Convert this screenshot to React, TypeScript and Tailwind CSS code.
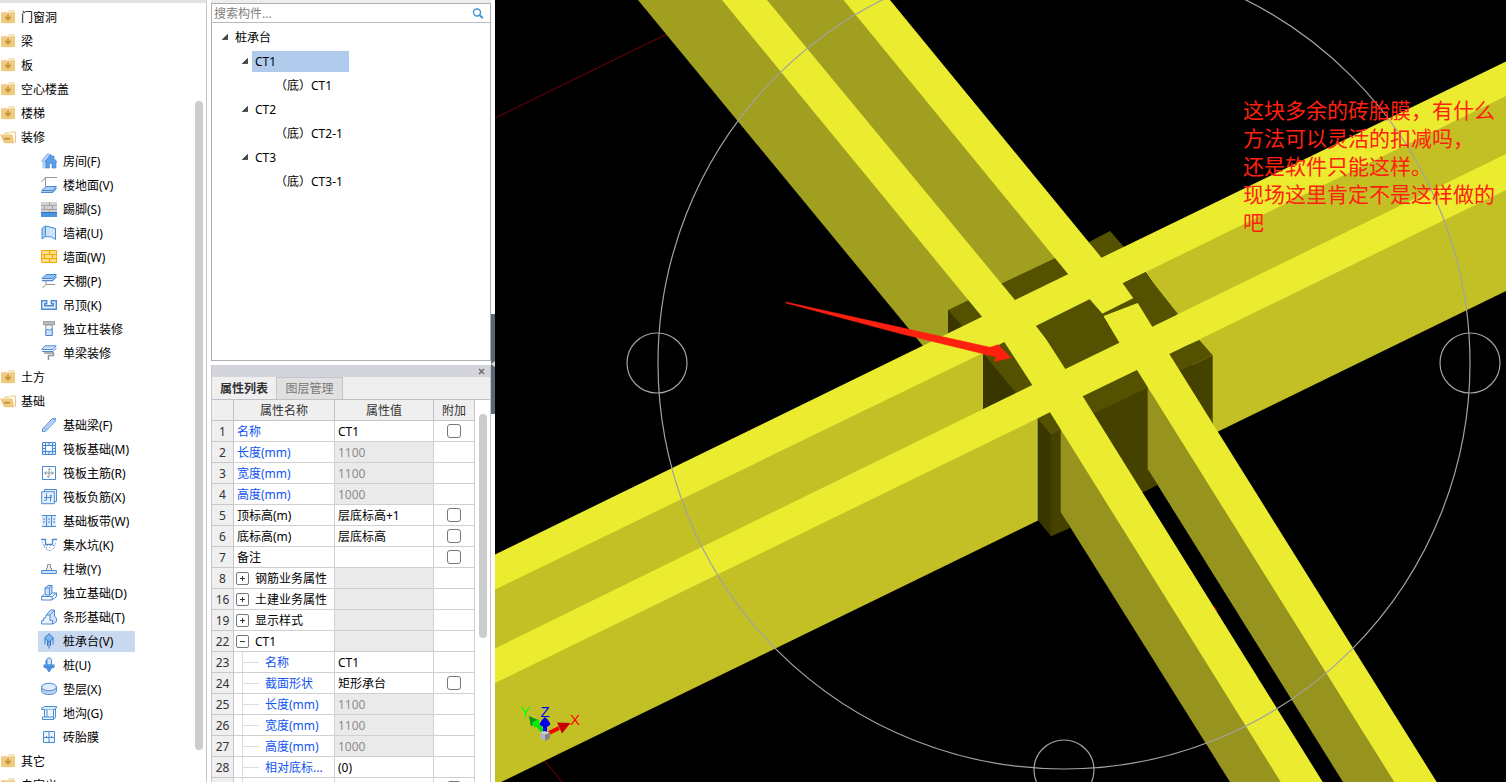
import type { ReactNode } from 'react';

/** Stroke presets shared by the component icons (16x16 grid). */
const BLUE = '#4a8ad4';
const PALE = '#cfe1f8';
const GREY = '#8f959b';

const ICONS: Record<string, ReactNode> = {
  room: (
    <>
      <path d="M.7 8.500 6.500 1.500 8 .8" fill="none" stroke="#9cc3f0" strokeWidth={2} />
      <path d="M2 8.500h2.500V15H2z" fill="#bcd7f6" stroke="#86b4ea" strokeWidth={0.6} />
      <path d="M9.500 1 3.500 8.500H5V15h3.500v-4.500h2.500V15h4V9h1L13 5.500V3h-1.500v1z" fill="#5a9ee8" stroke="#3f80cf" strokeWidth={0.6} />
    </>
  ),
  floor: (
    <>
      <path d="M0 5.500 4.500.5H16M4.500.5v9" fill="none" stroke={GREY} />
      <path d="M5 9.500h10.500L11 13.500H.8z" fill="#a9cdf6" stroke={BLUE} />
      <path d="M0 15.300h11.300l4.200-4" fill="none" stroke={BLUE} strokeWidth={1.400} />
    </>
  ),
  skirting: (
    <>
      <path d="M0 1h16v10H0z" fill="#d2d2d2" />
      <path d="M0 4.500h16M0 8.500h16M8.500 1v3.500M3.500 4.500v4M11.500 4.500v4M8.500 8.500v2.500" fill="none" stroke="#a4a4a4" />
      <path d="M0 11h16v5H0z" fill="#4a94e2" />
      <path d="M0 11.500h16" stroke="#2f73c4" />
    </>
  ),
  dado: (
    <>
      <path d="M1 3.500 4.500 1V11.500L1 14z" fill="#a9cdf6" stroke={BLUE} />
      <path d="M4.500 1 14.500 3.500V14.500l-4-2.500-6-.5z" fill="#cfe3fb" stroke={BLUE} />
    </>
  ),
  wall: (
    <>
      <path d="M.5 1.500h15v12H.5z" fill="#ffe08a" stroke="#f5a800" />
      <path d="M0 5.500h16M0 9.500h16M8.500 1v4.500M3.500 5.500v4M11.500 5.500v4M8.500 9.500v4" fill="none" stroke="#f5a800" strokeWidth={1.200} />
    </>
  ),
  ceiling: (
    <>
      <path d="M5 1.500h10.500l-4 4H1z" fill="#8fbff5" stroke={BLUE} />
      <path d="M1 7.500h10.500l4-4" fill="none" stroke={BLUE} strokeWidth={1.300} />
      <path d="M5 7.500v4H14M5 11.500 1.500 15" fill="none" stroke={GREY} />
    </>
  ),
  suspended: (
    <path d="M.7 3.700h5v3h-2v2h8.600v-2h-2v-3h5v8.600H.7z" fill="#e4effc" stroke={BLUE} strokeWidth={1.400} />
  ),
  column: (
    <>
      <path d="M2.500.7h11v3h-11z" fill="#bcc2c6" stroke={GREY} />
      <path d="M4.800 4v10.500h6.400V4z" fill="#eef5fd" stroke={GREY} />
      <path d="M4.800 9v5.500h6.400V7.500L8.500 9.500 7 8.500z" fill={PALE} stroke={BLUE} />
    </>
  ),
  beam: (
    <>
      <path d="M4 .8h11.200L12 4.500H.8z" fill={PALE} stroke={BLUE} />
      <path d="M1 6.500h11L15.500 3" fill="none" stroke={BLUE} />
      <path d="M3 8h9.500v2.500H7.500V15" fill="none" stroke={GREY} strokeWidth={1.500} />
    </>
  ),
  fbeam: (
    <>
      <path d="M1.500 12 11 2l3.500-.5-.5 3L4.500 14.200l-3 .3z" fill={PALE} stroke={BLUE} />
      <path d="M4.500 14V11.500L13.500 2M4.500 11.500h-3" fill="none" stroke="#7fb0e8" />
    </>
  ),
  raft: (
    <>
      <path d="M1.500 1.500h13v12h-13z" fill="#e4effc" stroke={BLUE} />
      <path d="M4.500 1.500v12M11.500 1.500v12M1.500 4.500h13M1.500 10.500h13M8 1.500v3M8 10.500v3M1.500 7.500h3M11.500 7.500h3" fill="none" stroke={BLUE} />
      <path d="M5.500 5.500h5v4h-5z" fill="#fff" />
    </>
  ),
  raftMain: (
    <>
      <path d="M1.500 1.500h13v13h-13z" fill="#fff" stroke={BLUE} />
      <path d="M8 3.500v9M3.500 8h9M5.500 6.500 3.500 8l2 1.500M10 4.500l-2-1M10.500 6.500 12.500 8l-2 1.500M8 12.500l-2-1" fill="none" stroke={GREY} />
    </>
  ),
  raftNeg: (
    <>
      <path d="M3.500 2V.5h12V12.500H14" fill="#e4effc" stroke={BLUE} />
      <path d="M.7 2.700h12.600v12H.7z" fill="#e4effc" stroke={BLUE} />
      <path d="M5.500 4.500V11M9.500 6v6.500M3 8.500h8M3 11.500l2.500-.5M9.500 6l1.500 1" fill="none" stroke={BLUE} />
    </>
  ),
  strip: (
    <>
      <path d="M1 2.500h14v11H1z" fill="#dce9fa" />
      <path d="M1 2.500h14M1 13.500h14M5.500 2.500v11M10.500 2.500v11" fill="none" stroke={BLUE} />
      <path d="M3 5v6M8 5v6M13 5v6" fill="none" stroke={BLUE} strokeDasharray="2 1" />
    </>
  ),
  sump: (
    <>
      <path d="M0 2.500h4.500v5h7v-5H16" fill="none" stroke={BLUE} strokeWidth={1.300} />
      <path d="M1 5l3 6 3 2.500h3l3-3 2-5.500" fill="none" stroke={BLUE} strokeDasharray="1 1" />
      <path d="M3 8.500h10M5 10.500h6" stroke={GREY} strokeDasharray="1 2" />
    </>
  ),
  pier: (
    <>
      <path d="M5.500 9V7h1V3.500h3V7h1v2" fill="#eee" stroke={GREY} />
      <path d="M.6 9.500h14.800v3H.6z" fill={PALE} stroke={BLUE} />
    </>
  ),
  isolated: (
    <>
      <path d="M4 10V3l3-2.500h4V8l-2 2z" fill={PALE} stroke={BLUE} />
      <path d="M4 3h4.500v7M8.500 3 11 .5" fill="none" stroke={BLUE} />
      <path d="M.6 11.500 3 9.500M.6 11.500h10.500V15H.6zM11 11.500 15.500 8v3.500L11 15M11 8h4.500" fill="none" stroke={BLUE} />
    </>
  ),
  stripBase: (
    <>
      <path d="M5 6.500 9.500 1h4v6l2 2.500v3L12 15" fill={PALE} stroke={BLUE} />
      <path d="M.6 15v-3.500h2V9H4.500l1-3H9v5.500h2.500V15zM9 6l4.500-5" fill="#eef5fd" stroke={BLUE} />
    </>
  ),
  cap: (
    <>
      <path d="M8 .8 12.500 5 8 9 3.500 5z" fill="#7db8ee" stroke="#2f7ccc" />
      <path d="M4 5.500v6M12 5.500v6M6.500 8v5M9.500 8v5M8 9v6.500" fill="none" stroke="#2f7ccc" />
    </>
  ),
  pile: (
    <>
      <path d="M5.500 2.500 7 1h2l1.500 1.500V8h-5z" fill="#cfe3fb" stroke={BLUE} />
      <path d="M5.500 3v6" stroke={BLUE} strokeWidth={2} />
      <path d="M3 7.500v3h10v-3M5 10.500 8 15l3-4.500z" fill="#4a94e2" stroke={BLUE} />
    </>
  ),
  cushion: (
    <>
      <path d="M.6 6v4c0 2 3.300 3.500 7.400 3.500s7.400-1.500 7.400-3.500V6z" fill="#bcd5f2" stroke={BLUE} />
      <ellipse cx={8} cy={6} rx={7.400} ry={3.800} fill="#dfebfa" stroke={BLUE} />
    </>
  ),
  trench: (
    <>
      <path d="M.8 4.500V3L3.500 1.500h12V3L13 4.500z" fill="#dfebfa" stroke={BLUE} />
      <path d="M3.500 4.500v7.500h-2v2.500h11V4.500" fill="#eef5fd" stroke={BLUE} />
      <path d="M6 4.500V12h6.500M3.500 12H6M14.500 4v8l-2 2.500" fill="none" stroke={BLUE} />
    </>
  ),
  brick: (
    <>
      <path d="M2.500 2.500h11v11h-11z" fill="#eef5fd" stroke={BLUE} />
      <path d="M8 2.500v11M2.500 8.500h11M5.500 9V7M10.500 9V7" fill="none" stroke={BLUE} />
    </>
  ),
};

type Leaf = { icon: string; label: string; active?: boolean };
type Group = { label: string; items?: Leaf[] };

const GROUPS: Group[] = [
  { label: '门窗洞' },
  { label: '梁' },
  { label: '板' },
  { label: '空心楼盖' },
  { label: '楼梯' },
  {
    label: '装修',
    items: [
      { icon: 'room', label: '房间(F)' },
      { icon: 'floor', label: '楼地面(V)' },
      { icon: 'skirting', label: '踢脚(S)' },
      { icon: 'dado', label: '墙裙(U)' },
      { icon: 'wall', label: '墙面(W)' },
      { icon: 'ceiling', label: '天棚(P)' },
      { icon: 'suspended', label: '吊顶(K)' },
      { icon: 'column', label: '独立柱装修' },
      { icon: 'beam', label: '单梁装修' },
    ],
  },
  { label: '土方' },
  {
    label: '基础',
    items: [
      { icon: 'fbeam', label: '基础梁(F)' },
      { icon: 'raft', label: '筏板基础(M)' },
      { icon: 'raftMain', label: '筏板主筋(R)' },
      { icon: 'raftNeg', label: '筏板负筋(X)' },
      { icon: 'strip', label: '基础板带(W)' },
      { icon: 'sump', label: '集水坑(K)' },
      { icon: 'pier', label: '柱墩(Y)' },
      { icon: 'isolated', label: '独立基础(D)' },
      { icon: 'stripBase', label: '条形基础(T)' },
      { icon: 'cap', label: '桩承台(V)', active: true },
      { icon: 'pile', label: '桩(U)' },
      { icon: 'cushion', label: '垫层(X)' },
      { icon: 'trench', label: '地沟(G)' },
      { icon: 'brick', label: '砖胎膜' },
    ],
  },
  { label: '其它' },
  { label: '自定义' },
];

type Row = {
  no: string;
  name: string;
  value?: string;
  blue?: boolean;
  locked?: boolean;
  check?: boolean;
  toggle?: '+' | '-';
  nested?: boolean;
};

const ROWS: Row[] = [
  { no: '1', name: '名称', value: 'CT1', blue: true, check: true },
  { no: '2', name: '长度(mm)', value: '1100', blue: true, locked: true },
  { no: '3', name: '宽度(mm)', value: '1100', blue: true, locked: true },
  { no: '4', name: '高度(mm)', value: '1000', blue: true, locked: true },
  { no: '5', name: '顶标高(m)', value: '层底标高+1', check: true },
  { no: '6', name: '底标高(m)', value: '层底标高', check: true },
  { no: '7', name: '备注', check: true },
  { no: '8', name: '钢筋业务属性', toggle: '+', locked: true },
  { no: '16', name: '土建业务属性', toggle: '+', locked: true },
  { no: '19', name: '显示样式', toggle: '+', locked: true },
  { no: '22', name: 'CT1', toggle: '-', locked: true },
  { no: '23', name: '名称', value: 'CT1', blue: true, nested: true },
  { no: '24', name: '截面形状', value: '矩形承台', blue: true, nested: true, check: true },
  { no: '25', name: '长度(mm)', value: '1100', blue: true, nested: true, locked: true },
  { no: '26', name: '宽度(mm)', value: '1100', blue: true, nested: true, locked: true },
  { no: '27', name: '高度(mm)', value: '1000', blue: true, nested: true, locked: true },
  { no: '28', name: '相对底标...', value: '(0)', blue: true, nested: true },
  { no: '', name: '', nested: true, check: true },
];

function FolderIcon({ open }: { open: boolean }) {
  return (
    <svg viewBox="0 0 16 16" className="size-4 shrink-0" aria-hidden="true">
      {open ? (
        <>
          <path d="M5 5V4h4.500l1-1H15.500v10.500" fill="#fff" stroke="#e8c47c" />
          <path d="M0 5.500h12.500l2 8.800H4z" fill="#efca80" />
          <path d="M4 9.700h6" stroke="#b98a2c" strokeWidth={1.500} />
        </>
      ) : (
        <>
          <path d="M8 2.500 9 1.200h5l1 1.300z" fill="#f0d39a" />
          <path d="M1 3.300h14v10.900H1z" fill="#efca80" />
          <path d="M8 5.700v6M5 8.700h6" stroke="#c4973c" strokeWidth={2} />
        </>
      )}
    </svg>
  );
}

function ComponentNav() {
  return (
    <nav className="flex w-[207px] shrink-0 border-t-3 border-r border-t-[#e2e2e6] border-r-[#c4c5cc] bg-white">
      <ul className="min-w-0 flex-1 overflow-hidden pt-0.5">
        {GROUPS.map((group) => (
          <li key={group.label}>
            <button type="button" className="flex h-6 items-center gap-[5px] whitespace-nowrap">
              <FolderIcon open={!!group.items} />
              <span className="pt-0.5">{group.label}</span>
            </button>
            {group.items && (
              <ul className="pl-[38px]">
                {group.items.map((item) => (
                  <li key={item.icon} className="flex h-6 items-center">
                    <button
                      type="button"
                      className={`flex h-[21px] items-center gap-1.5 pl-[3px] whitespace-nowrap ${item.active ? 'w-[97px] bg-[#c9d9f0]' : ''}`}
                    >
                      <svg viewBox="0 0 16 16" className="size-4 shrink-0" aria-hidden="true">
                        {ICONS[item.icon]}
                      </svg>
                      <span className="pt-0.5">{item.label}</span>
                    </button>
                  </li>
                ))}
              </ul>
            )}
          </li>
        ))}
      </ul>
      <div className="w-[11px] pt-[98px] pr-[3px] pb-8">
        <div className="h-full rounded-full bg-[#cccccc]" />
      </div>
    </nav>
  );
}

function Caret() {
  return (
    <svg viewBox="0 0 6 6" className="size-1.5 shrink-0" aria-hidden="true">
      <path d="M0 5.800 5.800.2v5.600z" fill="#444" stroke="#222" strokeWidth={0.500} />
    </svg>
  );
}

function InstanceTree() {
  const types = [
    { name: 'CT1', child: 'CT1', active: true },
    { name: 'CT2', child: 'CT2-1', active: false },
    { name: 'CT3', child: 'CT3-1', active: false },
  ];

  return (
    <section className="flex h-[358px] shrink-0 flex-col border border-[#adafb4] bg-white">
      <div className="flex h-[19px] items-center border-b border-[#b8bac2] px-0.5">
        <input
          type="search"
          aria-label="搜索构件"
          placeholder="搜索构件..."
          className="min-w-0 flex-1 pt-0.5 outline-none placeholder:text-[#808080]"
        />
        <svg viewBox="0 0 12 12" className="mr-1 size-3" aria-hidden="true">
          <circle cx={5} cy={5.500} r={3.500} fill="none" stroke="#3f94cf" strokeWidth={1.400} />
          <path d="M7.600 8 10.800 11.200" stroke="#3f94cf" strokeWidth={2} />
        </svg>
      </div>
      <ul className="pt-0.5">
        <li>
          <button type="button" className="flex h-6 items-center gap-[7px] pl-2.5">
            <Caret />
            <span className="pt-0.5">桩承台</span>
          </button>
          <ul>
            {types.map((t) => (
              <li key={t.name}>
                <button type="button" className="flex h-6 items-center gap-1 pl-[30px]">
                  <Caret />
                  <span className={`flex h-[21px] w-[97px] items-center pt-0.5 pl-[3px] ${t.active ? 'bg-[#b1cbec]' : ''}`}>
                    {t.name}
                  </span>
                </button>
                <button type="button" className="flex h-6 items-center pt-0.5 pl-[63px]">
                  （底）{t.child}
                </button>
              </li>
            ))}
          </ul>
        </li>
      </ul>
    </section>
  );
}

function PropertyName({ row }: { row: Row }) {
  if (row.toggle) {
    return (
      <span className="flex h-5 items-center gap-1.5 pl-0.5">
        <button
          type="button"
          aria-label={row.name}
          className="flex size-[13px] items-center justify-center rounded-xs border border-[#777777]"
        >
          <svg viewBox="0 0 7 7" className="size-[7px]" aria-hidden="true">
            <path d={row.toggle === '+' ? 'M1 3.500h5M3.500 1v5' : 'M1 3.500h5'} stroke="#333" />
          </svg>
        </button>
        <span className="pt-0.5">{row.name}</span>
      </span>
    );
  }
  if (row.nested) {
    return (
      <span className="flex h-5 items-center pl-2">
        <span className="mr-1.5 flex h-5 w-[17px] items-center border-l border-[#dddddd]">
          <span className="h-px w-full bg-[#dddddd]" />
        </span>
        <span className="pt-0.5">{row.name}</span>
      </span>
    );
  }
  return <span className="block pt-0.5 pl-[3px]">{row.name}</span>;
}

function PropertyTable() {
  return (
    <table className="w-[263px] table-fixed border-separate border-spacing-0">
      <colgroup>
        <col className="w-[22px]" />
        <col className="w-[101px]" />
        <col className="w-[99px]" />
        <col className="w-[41px]" />
      </colgroup>
      <thead>
        <tr className="h-[21px] bg-[#efeff0] text-[#333333]">
          <th className="border-r border-b border-[#c4c4c8] p-0" />
          <th className="border-r border-b border-[#c4c4c8] p-0 pt-0.5 font-normal">属性名称</th>
          <th className="border-r border-b border-[#c4c4c8] p-0 pt-0.5 font-normal">属性值</th>
          <th className="border-r border-b border-[#c4c4c8] p-0 pt-0.5 font-normal">附加</th>
        </tr>
      </thead>
      <tbody>
        {ROWS.map((row) => (
          <tr key={row.no} className="h-[21px]">
            <td className="border-r border-b border-[#c8c8cc] bg-[#efeff0] p-0 pt-0.5 text-center text-[#333333]">{row.no}</td>
            <td className={`border-r border-b border-[#d0d0d0] p-0 whitespace-nowrap ${row.blue ? 'text-[#1055f0]' : ''}`}>
              <PropertyName row={row} />
            </td>
            <td className={`border-r border-b border-[#d0d0d0] p-0 pt-0.5 pl-[3px] ${row.locked ? 'bg-[#eaeaea] text-[#8c8c8c]' : ''}`}>
              {row.value}
            </td>
            <td className="border-r border-b border-[#d0d0d0] p-0">
              {row.check && (
                <input
                  type="checkbox"
                  aria-label={`附加 ${row.name}`}
                  className="mx-auto block size-3.5 appearance-none rounded-[3px] border border-[#777777] bg-white"
                />
              )}
            </td>
          </tr>
        ))}
      </tbody>
    </table>
  );
}

function PropertyPanel() {
  return (
    <section className="mt-1 flex min-h-0 flex-1 flex-col border-x border-[#c4c5cc] bg-white">
      <div className="flex h-3 shrink-0 items-center justify-end bg-[#d3d4dc] pr-[5px]">
        <button type="button" aria-label="关闭">
          <svg viewBox="0 0 7 7" className="size-[7px]" aria-hidden="true">
            <path d="M1 1l5 5M6 1 1 6" stroke="#666" strokeWidth={1.300} />
          </svg>
        </button>
      </div>
      <div role="tablist" className="flex h-[23px] shrink-0 border-b border-[#c0c1c8] bg-[#efeff0]">
        <button type="button" role="tab" aria-selected className="w-16 pt-0.5 font-bold text-[#333333]">
          属性列表
        </button>
        <button
          type="button"
          role="tab"
          aria-selected={false}
          className="w-[67px] border border-b-0 border-[#c4c5cc] bg-[#e0e0e0] text-[#777777]"
        >
          图层管理
        </button>
      </div>
      <div className="flex min-h-0 flex-1 items-start gap-1 overflow-hidden">
        <PropertyTable />
        <div className="mt-3.5 h-56 w-2 rounded-full bg-[#cccccc]" />
      </div>
    </section>
  );
}

/** 3D view: crossing brick forms around the pile cap, with orbit rings and the axis triad. */
function Scene() {
  return (
    <svg
      viewBox="495 0 1011 782"
      preserveAspectRatio="xMinYMin slice"
      className="block h-full w-full"
      role="img"
      aria-label="三维视图"
    >
      <path d="M495 118 667 34M545 761l17 21" stroke="#7a0000" />

      {/* north-west pair */}
      <path d="M638 0h88l260 317-63 29z" fill="#a09f20" />
      <path d="M763 0h84l225 274-62 28z" fill="#a09f20" />
      <path d="M948 310 969 300l17 15-35 19z" fill="#545200" />
      <path d="M948 310l16 18-16 8z" fill="#3a3600" />
      <path d="M999 284.700 1055.500 258l18 15-58 31z" fill="#545200" />
      <path d="M1089 242 1110 231l14 16-24 16z" fill="#545200" />

      {/* side faces running east-west */}
      <path d="M495 585 985 349v64L495 659z" fill="#c3c026" />
      <path d="M495 679 1038 414v106.500L495 785z" fill="#c3c026" />
      <path d="M1144 270 1506 92v66L1178 318z" fill="#c3c026" />
      <path d="M1185 344 1506 186V291L1216 432.500z" fill="#c3c026" />

      {/* pile cap */}
      <path d="M1006 339 983 350v5l34 41 20-11z" fill="#545200" />
      <path d="M983 353l33 40-33 20z" fill="#3a3600" />
      <path d="M1036 326 1090 299l12 14.500 31-15-10.500-15 22.500-11L1178 314l-26 14-15-24-34 12 16.500 27L1065 370l-19-32z" fill="#545200" />
      <path d="M1080 395 1137 367l12 21-58 30z" fill="#545200" />
      <path d="M1092 414.300 1148 387.700V469l9.500 16-13.800 7-6 0z" fill="#454200" />
      <path d="M1166 354 1199.300 340l13.400 15.300L1178 372.500z" fill="#545200" />
      <path d="M1178 372.500 1212.700 355.300V424l-6 1z" fill="#454200" />
      <path d="M1037.700 416 1050 410l14 18-13 8-13.300-16z" fill="#545200" />
      <path d="M1037.700 418.500 1051 434.700V536.300L1037.700 520z" fill="#3a3600" />
      <path d="M1051 434.700 1062 429v82l8 17-19 8.300z" fill="#454200" />

      {/* south-east pair */}
      <path d="M1060.700 426 1284 782h-54L1060.700 512z" fill="#96931f" />
      <path d="M1147.700 384 1397 782H1343L1147.700 469z" fill="#96931f" />

      {/* top faces */}
      <g fill="#ebec2f">
        <path d="M722 0h45l248 300-20 25-13-8.300z" />
        <path d="M843.500 0H890l211.500 257.700-20 26-13.500-9.700z" />
        <path
          fillRule="evenodd"
          d="M495 554.500 982 316.700 1015 300l53.500-26 33-16.300L1506 61.500V96L1122.700 283.300l10.600 15-31 15.400L1089.700 299.300 1036 326l9.700 12.300L1065.300 369l54-26.300-16-26.700L1137.700 303l14.600 23.700L1506 154v36L1169.300 354 1436.700 782H1394.300L1137 370l-54.300 26.300L1322.700 782h-42L1050 412.300 495 683V648.500L1032.300 385 1004.300 342 983 353 495 589.500z"
        />
      </g>

      {/* orbit rings */}
      <g fill="none" stroke="#a2a2a2" strokeWidth={1.200}>
        <circle cx={1064} cy={363} r={406} />
        <circle cx={657} cy={363} r={30} />
        <circle cx={1470} cy={363} r={30} />
        <circle cx={1064} cy={770} r={30} />
      </g>

      <path d="M1214 606l3 5" stroke="#e00000" />

      <path
        d="M785.500 302 900 327.300l90 20 8-2.600 13 13-16.700 3.800 2-4.500L900 333.500l-114-30.500z"
        fill="#ff2010"
        stroke="#ff2010"
        strokeWidth={0.500}
      />

      {/* axis triad */}
      <path d="M549 733l10-5" stroke="#f00000" strokeWidth={4} />
      <path d="M557 722.500 570.500 723l-8.500 10.500z" fill="#c80000" />
      <path d="M543.500 732 533 720" stroke="#00e400" strokeWidth={4} />
      <path d="M529 716l9 4-7 6.500z" fill="#009a10" />
      <path d="M532 722.500 539 719l.5 5-5 4z" fill="#00f000" />
      <path d="M545 733v-9" stroke="#0000ff" strokeWidth={4} />
      <path d="M539.500 724 542 720l3-3 3 3 2.500 4c-2 4-9 4-11 0z" fill="#0000e8" />
      <path d="M540 732.500l5 2v6.500l-5-2.500z" fill="#b4b4b4" />
      <path d="M545 734.500l5-2v6l-5 2.500z" fill="#858585" />
      <path d="M540 732.500l4-1.500 6 1.500-5 2z" fill="#d0d0d0" />
      <g fontFamily="Liberation Sans" fontSize={15} textAnchor="middle">
        <text x={525} y={717} fill="#00ff00">Y</text>
        <text x={545} y={717} fill="#0000ff">Z</text>
        <text x={575} y={725} fill="#ff0000">X</text>
      </g>
    </svg>
  );
}

export default function App() {
  return (
    <div className="flex h-screen overflow-hidden bg-white font-['Noto_Sans','Noto_Sans_CJK_SC',sans-serif] text-[12px] leading-[18px] text-black">
      <ComponentNav />
      <div className="ml-1 flex w-[280px] shrink-0 flex-col border-t-3 border-[#ededf0]">
        <InstanceTree />
        <PropertyPanel />
      </div>
      <div className="w-1 shrink-0 pt-[314px]">
        <button type="button" aria-label="折叠面板" className="flex h-[100px] w-1 items-center bg-[#5c6773]">
          <svg viewBox="0 0 4 8" className="h-2 w-1" aria-hidden="true">
            <path d="M4 1v6L0 4z" fill="#d8dade" />
          </svg>
        </button>
      </div>
      <main className="relative min-w-0 flex-1 overflow-hidden bg-black">
        <Scene />
        <p className="absolute top-[95px] right-0 w-[263px] font-['Noto_Sans_CJK_SC',sans-serif] text-[21px] leading-7 text-[#ff2010]">
          这块多余的砖胎膜，有什么
          <br />
          方法可以灵活的扣减吗，
          <br />
          还是软件只能这样。
          <br />
          现场这里肯定不是这样做的
          <br />吧
        </p>
      </main>
    </div>
  );
}
